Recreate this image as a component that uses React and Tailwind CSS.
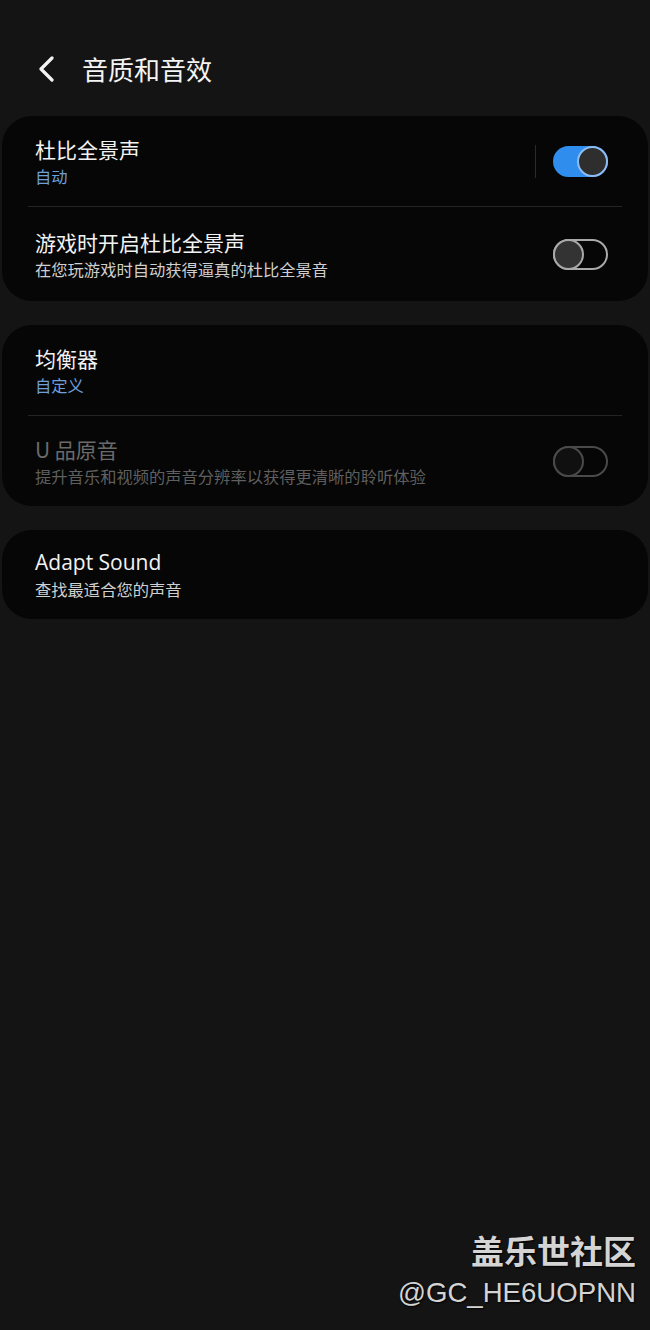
import React from 'react';

const cjk = { fontFamily: '"Noto Sans CJK SC", "Noto Sans", sans-serif' };
const latin = { fontFamily: '"Open Sans", "Noto Sans CJK SC", sans-serif' };

function Toggle({ on, disabled }) {
  if (on) {
    return (
      <div className="relative w-[55px] h-[31px] rounded-full bg-[#2f8ded]">
        <div className="absolute right-0 top-0 w-[31px] h-[31px] rounded-full bg-[#2e2e2e] border-2 border-[#8dbcf2]" />
      </div>
    );
  }
  const border = disabled ? 'border-[#4a4a4a]' : 'border-[#a9a9a9]';
  const knob = disabled ? 'bg-[#101010] border-[#4a4a4a]' : 'bg-[#333333] border-[#a9a9a9]';
  return (
    <div className={`relative w-[55px] h-[31px] rounded-full border-2 ${border}`}>
      <div className={`absolute -left-[2px] -top-[2px] w-[31px] h-[31px] rounded-full border-2 ${knob}`} />
    </div>
  );
}

function Row({ title, sub, subTone = 'gray', dim, right, height, latinTitle }) {
  const subColor =
    subTone === 'blue' ? 'text-[#6f9fd8]' : dim ? 'text-[#5f5f5f]' : 'text-[#cfcfcf]';
  return (
    <div className="flex items-center pl-[33px] pr-[40px]" style={{ height }}>
      <div className="flex-1 flex flex-col">
        <div
          className={`leading-[26px] ${latinTitle ? 'text-[21px]' : 'text-[21px]'} ${dim ? 'text-[#6a6a6a]' : 'text-[#f2f2f2]'}`}
          style={latinTitle ? latin : cjk}
        >
          {title}
        </div>
        <div className={`text-[16.3px] leading-[22px] mt-[3px] ${subColor}`} style={cjk}>
          {sub}
        </div>
      </div>
      {right}
    </div>
  );
}

const Divider = () => <div className="mx-[26px] h-px bg-[#242424]" />;

export default function App() {
  return (
    <div className="w-[650px] h-[1330px] bg-[#141414] flex flex-col overflow-hidden">
      <div className="h-[116px] flex items-center pl-[38px] pt-[22px]">
        <svg width="17" height="26" viewBox="0 0 17 26" fill="none">
          <path d="M14 2 L3 13 L14 24" stroke="#f4f4f4" strokeWidth="3.2" strokeLinecap="round" strokeLinejoin="round" />
        </svg>
        <div className="ml-[27px] text-[26px] leading-[32px] text-[#f4f4f4]" style={cjk}>
          音质和音效
        </div>
      </div>

      <div className="mx-[2px] rounded-[30px] bg-[#060606]">
        <Row
          title="杜比全景声"
          sub="自动"
          subTone="blue"
          height={90}
          right={
            <div className="flex items-center">
              <div className="w-px h-[33px] bg-[#2a2a2a] mr-[17px]" />
              <Toggle on />
            </div>
          }
        />
        <Divider />
        <Row
          title="游戏时开启杜比全景声"
          sub="在您玩游戏时自动获得逼真的杜比全景音"
          height={94}
          right={<Toggle />}
        />
      </div>

      <div className="mx-[2px] mt-[24px] rounded-[30px] bg-[#060606]">
        <Row title="均衡器" sub="自定义" subTone="blue" height={90} />
        <Divider />
        <Row
          title="U 品原音"
          sub="提升音乐和视频的声音分辨率以获得更清晰的聆听体验"
          dim
          height={90}
          right={<Toggle disabled />}
        />
      </div>

      <div className="mx-[2px] mt-[24px] rounded-[30px] bg-[#060606]">
        <Row title="Adapt Sound" latinTitle sub="查找最适合您的声音" height={89} />
      </div>

      <div className="mt-auto mb-[17px] pr-[14px] flex flex-col items-end">
        <div
          className="text-[33px] leading-[40px] font-bold text-[#d4d4d4] [text-shadow:1px_1px_2px_#000]"
          style={cjk}
        >
          盖乐世社区
        </div>
        <div
          className="text-[27.6px] leading-[40px] mt-[3px] text-[#d4d4d4] [text-shadow:1px_1px_2px_#000]"
          style={{ fontFamily: '"Liberation Sans", Arial, sans-serif' }}
        >
          @GC_HE6UOPNN
        </div>
      </div>
    </div>
  );
}
